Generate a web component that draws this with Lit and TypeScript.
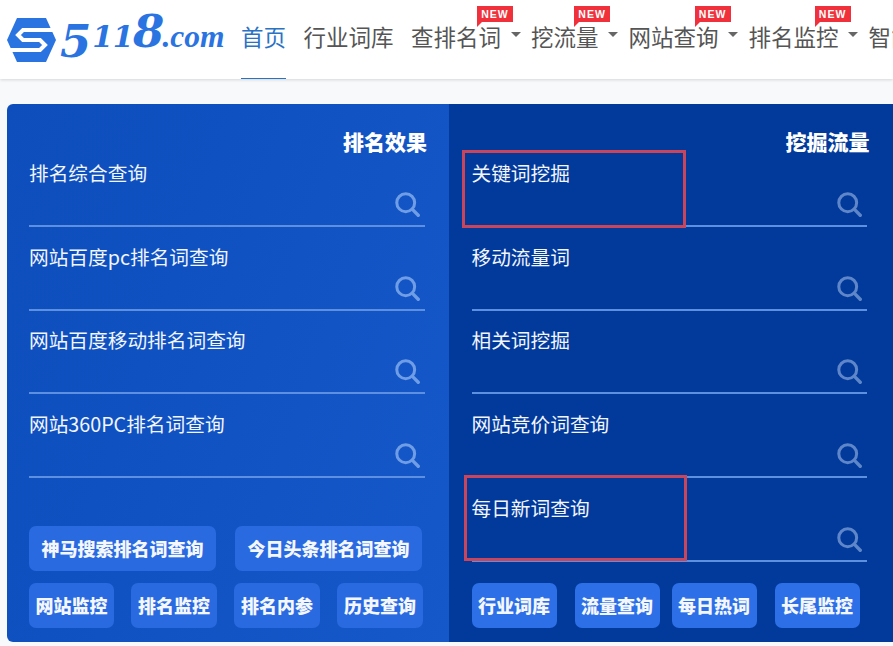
import { LitElement, html, css, svg } from "lit";
import { customElement } from "lit/decorators.js";

const nav = [
  { t: "查排名词", isNew: 66 },
  { t: "挖流量", isNew: 43 },
  { t: "网站查询", isNew: 66 },
  { t: "排名监控", isNew: 66 },
];

const searchIcon = svg`<svg class="si" viewBox="0 0 28 28" width="25" height="25"><circle cx="12" cy="12" r="10" fill="none" stroke="currentColor" stroke-width="3.4"/><path d="M19.5 19.5l6.5 6.5" fill="none" stroke="currentColor" stroke-width="3.8" stroke-linecap="round"/></svg>`;

@customElement("app-root")
export class AppRoot extends LitElement {
  static styles = css`
    :host { display: block; width: 893px; height: 646px; overflow: hidden; background: #f8f9fa; font-family: "Noto Sans CJK SC", "Liberation Sans", sans-serif; position: relative; }
    header { height: 79px; background: #fff; box-shadow: 0 1px 3px rgba(0,0,0,.14); display: flex; align-items: stretch; white-space: nowrap; overflow: hidden; }
    .logo { display: flex; align-items: flex-start; width: 241px; flex: none; padding: 0 0 0 7px; box-sizing: border-box; }
    .logo svg { margin-top: 18px; flex: none; }
    .word { color: #2a74e2; font-family: "DejaVu Serif", serif; font-style: italic; font-weight: 700; margin: 2px 0 0 4px; line-height: 60px; font-size: 45px; }
    .five { vertical-align: -10px; letter-spacing: 1px; }
    .one { font-size: 30px; letter-spacing: -0.5px; }
    .eight { letter-spacing: -2px; }
    .word small { font-family: "Liberation Serif", serif; font-size: 31.5px; letter-spacing: 0; }
    nav { display: flex; align-items: stretch; font-size: 22.5px; color: #555; }
    .item { position: relative; display: flex; align-items: center; height: 79px; box-sizing: border-box; padding-bottom: 7px; line-height: 1; flex: none; }
    .plain { margin-right: 17.5px; }
    .drop { margin-right: 10.5px; }
    .active { color: #2a72c4; }
    .active::after { content: ""; position: absolute; left: 0; right: 0; bottom: -1px; height: 2px; background: #2a72c4; }
    .caret { width: 0; height: 0; margin-left: 9.5px; border-left: 5px solid transparent; border-right: 5px solid transparent; border-top: 5px solid #666; margin-top: -3px; }
    .new { position: absolute; top: 6px; width: 36px; height: 16px; background: #f0313c; color: #fff; font: 700 10.5px/16px "Liberation Sans", sans-serif; letter-spacing: 1px; text-align: center; }
    .new::after { content: ""; position: absolute; left: 0; top: 16px; border-top: 5px solid #f0313c; border-right: 5px solid transparent; }

    .panel { display: grid; grid-template-columns: 442px 444px; margin: 25px 0 0 7px; height: 538px; border-radius: 6px 0 0 6px; overflow: hidden; color: #fff; }
    .col { display: flex; flex-direction: column; box-sizing: border-box; padding: 22px 0 14px; }
    .left { background: linear-gradient(110deg, #0d4dbc, #1558c9); padding-left: 22px; padding-right: 24px; }
    .right { background: #023a9c; padding-left: 22.5px; padding-right: 26.5px; }
    .title { font-size: 21px; font-weight: 900; line-height: 30px; height: 34px; text-align: right; }
    .left .title { margin-right: -2px; }
    .right .title { margin-right: -3px; }
    .rows { display: flex; flex-direction: column; gap: 16.7px; }
    .row { height: 67px; box-sizing: border-box; border-bottom: 2px solid #5e90e2; display: flex; flex-direction: column; justify-content: space-between; font-size: 19.7px; line-height: 26px; color: #f2f6ff; }
    .si { align-self: flex-end; margin: 0 5px 8px 0; display: block; }
    .left .si { color: #6f9de6; }
    .right .si { color: #5f86c9; }
    .btns { margin-top: auto; display: flex; flex-direction: column; gap: 12px; }
    .line { display: flex; }
    .btn { height: 45px; padding-bottom: 2px; box-sizing: border-box; border-radius: 7px; background: #2a6ae0; font-size: 18px; font-weight: 900; display: flex; align-items: center; justify-content: center; line-height: 1; color: #f4f7ff; flex: none; }
    .right .btn { background: #2c6fe6; }
    .g19 { gap: 19px; }
    .w187 { width: 187px; }
    .w85 { width: 85px; }
    .w86 { width: 86px; }
    .g17 { gap: 17px; }
    .g18 { margin-left: 18px; }
    .g12 { margin-left: 12px; }
    .mark { position: absolute; border: 3px solid #c8455c; box-sizing: border-box; pointer-events: none; }
    .m1 { left: 462px; top: 150px; width: 224px; height: 78px; }
    .m2 { left: 464px; top: 475px; width: 223px; height: 86px; }
  `;

  render() {
    const left = ["排名综合查询", "网站百度pc排名词查询", "网站百度移动排名词查询", "网站360PC排名词查询"];
    const right = ["关键词挖掘", "移动流量词", "相关词挖掘", "网站竞价词查询", "每日新词查询"];
    const row = (t: string) => html`<div class="row"><span>${t}</span>${searchIcon}</div>`;
    return html`
      <header>
        <div class="logo">
          <svg width="49" height="44" viewBox="0 0 49 44">
            <path fill="#2a74e2" d="M10 0H39L49 22L39 44H10L0 22Z"/>
            <path fill="none" stroke="#fff" stroke-width="4" stroke-linejoin="miter" d="M50 12H16L11 17L16 22H33L38 27L33 32H-1"/>
          </svg>
          <div class="word"><span class="five">5</span><span class="one">11</span><span class="eight">8</span><small>.com</small></div>
        </div>
        <nav>
          <div class="item plain active">首页</div>
          <div class="item plain">行业词库</div>
          ${nav.map(n => html`<div class="item drop">${n.t}<span class="caret"></span><span class="new" style="left:${n.isNew}px">NEW</span></div>`)}
          <div class="item">智能</div>
        </nav>
      </header>
      <div class="panel">
        <section class="col left">
          <div class="title">排名效果</div>
          <div class="rows">${left.map(row)}</div>
          <div class="btns">
            <div class="line g19"><div class="btn w187">神马搜索排名词查询</div><div class="btn w187">今日头条排名词查询</div></div>
            <div class="line g17"><div class="btn w85">网站监控</div><div class="btn w86">排名监控</div><div class="btn w86">排名内参</div><div class="btn w86">历史查询</div></div>
          </div>
        </section>
        <section class="col right">
          <div class="title">挖掘流量</div>
          <div class="rows">${right.map(row)}</div>
          <div class="btns">
            <div class="line"><div class="btn w85">行业词库</div><div class="btn w85 g18">流量查询</div><div class="btn w85 g12">每日热词</div><div class="btn w85 g18">长尾监控</div></div>
          </div>
        </section>
      </div>
      <div class="mark m1"></div>
      <div class="mark m2"></div>
    `;
  }
}
